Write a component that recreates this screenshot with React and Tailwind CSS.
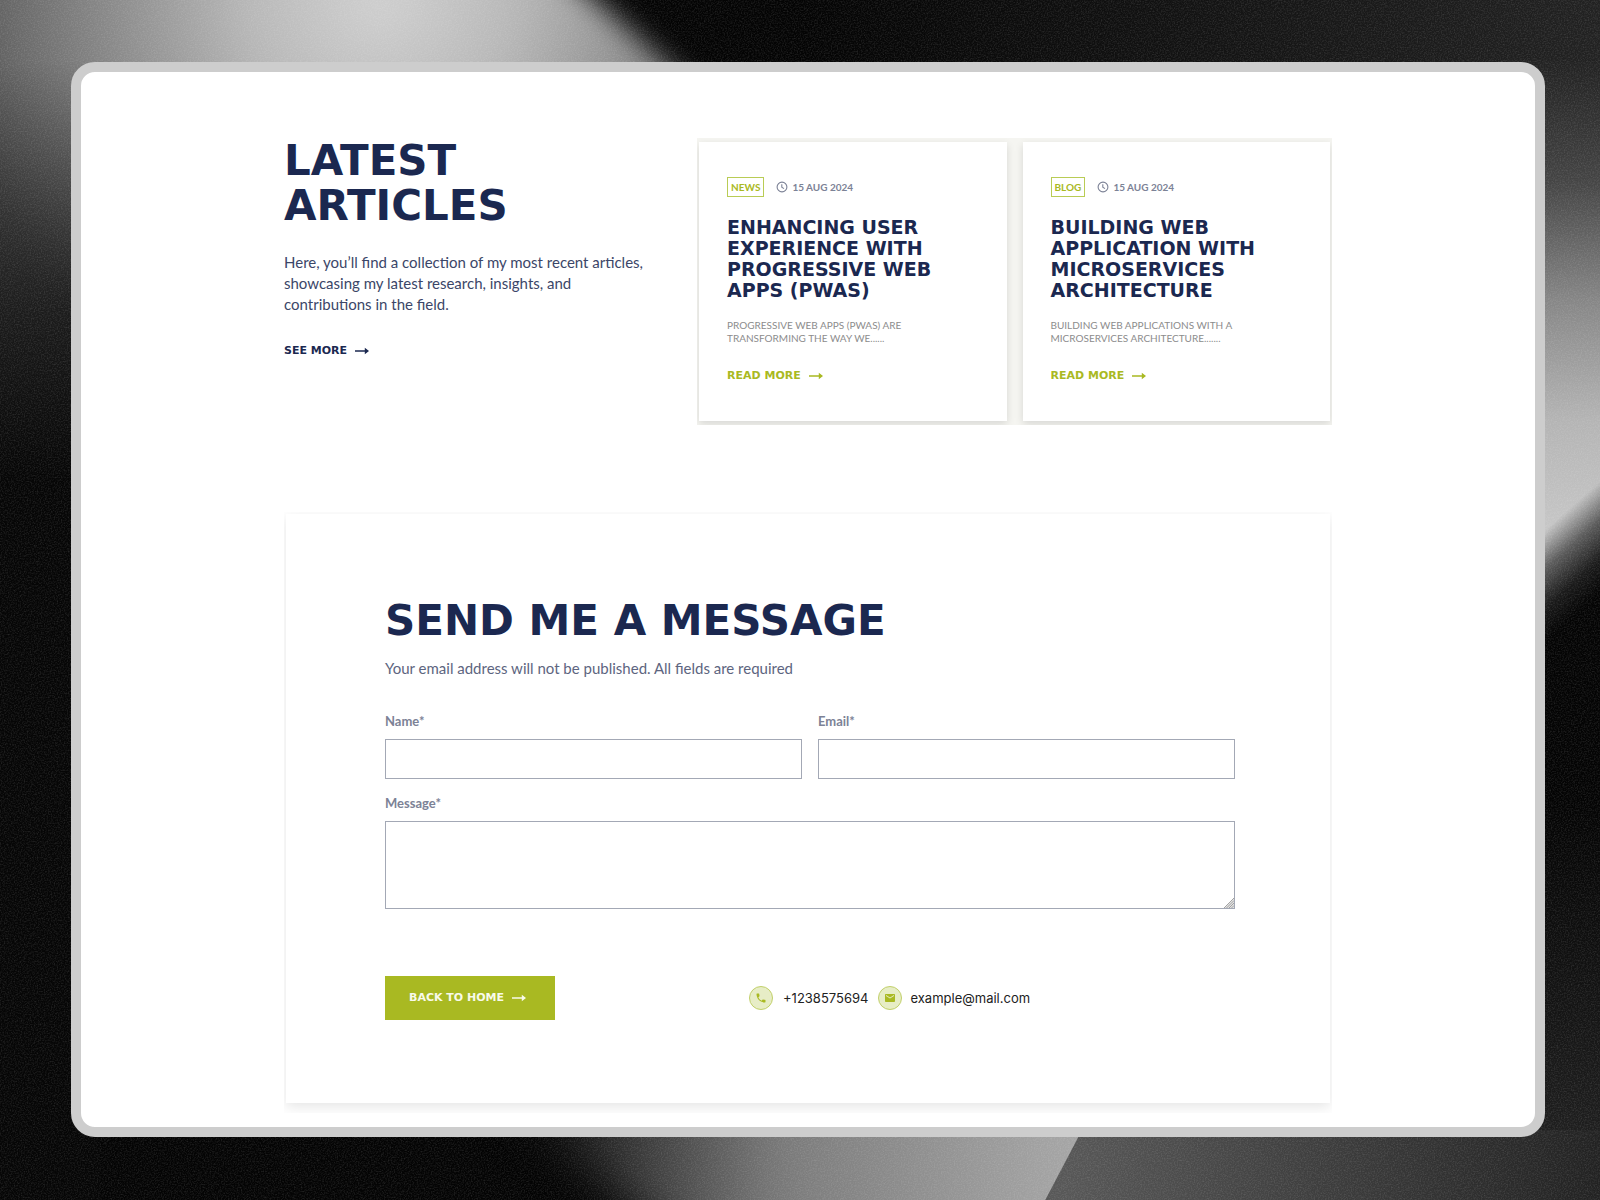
import React from "react";

const articles = [
  {
    id: "pwa",
    tag: "News",
    date: "15 Aug 2024",
    title: ["Enhancing User", "Experience with", "Progressive Web", "Apps (PWAs)"],
    excerpt: ["Progressive Web Apps (PWAs) are", "transforming the way we......"],
  },
  {
    id: "microservices",
    tag: "Blog",
    date: "15 Aug 2024",
    title: ["Building Web", "Application with", "Microservices", "Architecture"],
    excerpt: ["Building web applications with a", "microservices architecture......."],
  },
];

export default function App() {
  return (
    <div className="relative min-h-screen overflow-hidden bg-black pt-[62px] pr-[55px] pb-[63px] pl-[71px] font-[Lato,sans-serif] text-[#1b2850]">
      <Backdrop />
      <main className="relative rounded-3xl border-10 border-[#cdcdcd] bg-white pt-[66px] pb-[14px]">
        <div className="mx-auto max-w-[1048px]">
          <LatestArticles />
          <ContactForm />
        </div>
      </main>
    </div>
  );
}

/* ================= ARTICLES ================= */
function LatestArticles() {
  return (
    <section className="flex items-start justify-between">
      <div>
        <h2 className="font-['DejaVu_Sans',sans-serif] text-[42px] leading-[45px] font-bold uppercase">
          Latest
          <br />
          Articles
        </h2>
        <p className="mt-[24px] text-[15px] leading-[21px] text-[#3b4668]">
          Here, you’ll find a collection of my most recent articles,
          <br />
          showcasing my latest research, insights, and
          <br />
          contributions in the field.
        </p>
        <a href="#articles" className="mt-[28px] inline-flex items-center gap-2 font-['DejaVu_Sans',sans-serif] text-[11px] leading-4 font-bold uppercase">
          See more
          <Arrow />
        </a>
      </div>

      <div className="grid w-[635px] grid-cols-2 gap-4 overflow-hidden bg-[#f5f5f1] px-[2px] py-1">
        {articles.map((a) => (
          <ArticleCard key={a.id} article={a} />
        ))}
      </div>
    </section>
  );
}

function ArticleCard({ article }) {
  return (
    <article className="bg-white px-7 pt-[35px] pb-[36px] shadow-[0_3px_8px_rgba(0,0,0,0.12)]">
      <div className="flex items-center gap-3 text-[10px] leading-4">
        <span className="border border-[#b9cc55] px-[3px] py-px font-bold text-[#a9b922] uppercase">
          {article.tag}
        </span>
        <span className="flex items-center gap-1 font-bold text-[#7c8296] uppercase">
          <Clock />
          {article.date}
        </span>
      </div>

      <h3 className="mt-[20px] font-['DejaVu_Sans',sans-serif] text-[19px] leading-[21px] font-bold whitespace-nowrap uppercase">
        {article.title.map((line) => (
          <span key={line} className="block">{line}</span>
        ))}
      </h3>

      <p className="mt-[18px] text-[10px] leading-[13px] whitespace-nowrap text-[#8c8c8c] uppercase">
        {article.excerpt.map((line) => (
          <span key={line} className="block">{line}</span>
        ))}
      </p>

      <a href={`#${article.id}`} className="mt-[23px] inline-flex items-center gap-2 font-['DejaVu_Sans',sans-serif] text-[11px] leading-4 font-bold text-[#a9b922] uppercase">
        Read more
        <Arrow />
      </a>
    </article>
  );
}

/* ================= CONTACT FORM ================= */
function ContactForm() {
  const label = "block text-[13px] leading-4 font-bold text-[#7c8296]";
  const field = "mt-[10px] block w-full border border-[#a3a8b5] bg-white px-3 text-sm outline-none";

  return (
    <section className="mt-[87px] overflow-hidden px-[2px] pt-[2px] pb-[10px]">
      <div className="bg-white pt-[84px] pr-[95px] pb-[83px] pl-[99px] shadow-[0_4px_12px_rgba(0,0,0,0.1)]">
        <h2 className="font-['DejaVu_Sans',sans-serif] text-[42px] leading-[45px] font-bold uppercase">
          Send me a message
        </h2>
        <p className="mt-[15px] text-[15px] leading-[21px] text-[#5d6580]">
          Your email address will not be published. All fields are required
        </p>

        <form className="mt-[34px]" onSubmit={(e) => e.preventDefault()}>
          <div className="grid grid-cols-2 gap-4">
            <div>
              <label htmlFor="name" className={label}>Name*</label>
              <input id="name" type="text" className={`${field} h-10`} />
            </div>
            <div>
              <label htmlFor="email" className={label}>Email*</label>
              <input id="email" type="email" className={`${field} h-10`} />
            </div>
          </div>

          <div className="relative mt-4">
            <label htmlFor="message" className={label}>Message*</label>
            <textarea id="message" className={`${field} h-[88px] resize-none py-2`} />
            <Grip />
          </div>

          <div className="mt-[67px] flex items-center">
            <button type="button" className="flex h-[44px] w-[170px] items-center gap-2 bg-[#a9b922] px-6 font-['DejaVu_Sans',sans-serif] text-[11px] font-bold whitespace-nowrap text-[#f8faea] uppercase">
              Back to home
              <Arrow />
            </button>
            <div className="ml-[194px] flex items-center gap-[10px] font-[Inter,sans-serif] text-[13px] leading-5 text-[#222]">
              <a href="tel:+1238575694" className="flex items-center gap-[10px]">
                <ContactIcon>
                  <path d="M6.62 10.79a15.15 15.15 0 0 0 6.59 6.59l2.2-2.2a1 1 0 0 1 1.02-.24c1.12.37 2.33.57 3.57.57.55 0 1 .45 1 1V20c0 .55-.45 1-1 1C10.61 21 3 13.39 3 4c0-.55.45-1 1-1h3.5c.55 0 1 .45 1 1 0 1.25.2 2.45.57 3.57.11.35.03.74-.25 1.02z" />
                </ContactIcon>
                +1238575694
              </a>
              <a href="mailto:example@mail.com" className="flex items-center gap-2">
                <ContactIcon>
                  <path d="M20 4H4c-1.1 0-2 .9-2 2v12c0 1.1.9 2 2 2h16c1.1 0 2-.9 2-2V6c0-1.1-.9-2-2-2m0 4-8 5-8-5V6l8 5 8-5z" />
                </ContactIcon>
                example@mail.com
              </a>
            </div>
          </div>
        </form>
      </div>
    </section>
  );
}

/* ================= ICONS ================= */
function ContactIcon({ children }) {
  return (
    <span className="flex size-6 items-center justify-center rounded-full border border-[#c2d06a] bg-[#e7edc6]">
      <svg viewBox="0 0 24 24" className="size-3" fill="#a9b922" aria-hidden="true">
        {children}
      </svg>
    </span>
  );
}

function Arrow() {
  return (
    <svg viewBox="0 0 14 8" className="h-2 w-[14px]" fill="currentColor" aria-hidden="true">
      <path d="M0 3.2h9.8V0.8L14 4l-4.2 3.2V4.8H0z" />
    </svg>
  );
}

function Clock() {
  return (
    <svg viewBox="0 0 12 12" className="size-3" fill="none" stroke="currentColor" strokeWidth="1.1" aria-hidden="true">
      <circle cx="6" cy="6" r="4.9" />
      <path d="M5.8 3.2v3l2.2 1.4" />
    </svg>
  );
}

function Grip() {
  return (
    <svg viewBox="0 0 10 10" className="absolute right-px bottom-px size-[10px]" aria-hidden="true">
      <path d="M10 0v10H0z" fill="#e2e2e2" />
      <path d="M0 10 10 0M2.5 10 10 2.5M5 10l5-5M7.5 10 10 7.5" stroke="#9a9a9a" strokeWidth="0.9" />
    </svg>
  );
}

/* Dark blurred light streaks with a little film grain */
function Backdrop() {
  return (
    <svg className="absolute inset-0 size-full" viewBox="0 0 1600 1200" preserveAspectRatio="none" aria-hidden="true">
      <defs>
        <filter id="soft" x="-20%" y="-20%" width="140%" height="140%" colorInterpolationFilters="sRGB">
          <feGaussianBlur stdDeviation="14" />
        </filter>
        <filter id="softer" x="-60%" y="-60%" width="220%" height="220%" colorInterpolationFilters="sRGB">
          <feGaussianBlur stdDeviation="22" />
        </filter>
        <filter id="grain" x="0" y="0" width="100%" height="100%" colorInterpolationFilters="sRGB">
          <feTurbulence type="fractalNoise" baseFrequency="0.7" numOctaves="2" />
          <feColorMatrix values="0 0 0 0 1  0 0 0 0 1  0 0 0 0 1  1 0 0 0 -0.4" />
        </filter>
        <radialGradient id="topLight" gradientUnits="userSpaceOnUse" cx="380" cy="0" r="440">
          <stop offset="0" stopColor="#d0d0d0" />
          <stop offset="0.3" stopColor="#b8b8b8" />
          <stop offset="0.65" stopColor="#858585" />
          <stop offset="1" stopColor="#505050" />
        </radialGradient>
        <linearGradient id="leftFade" gradientUnits="userSpaceOnUse" x1="0" y1="60" x2="0" y2="480">
          <stop offset="0" stopColor="#060606" stopOpacity="0" />
          <stop offset="0.6" stopColor="#060606" stopOpacity="0.7" />
          <stop offset="1" stopColor="#060606" />
        </linearGradient>
        <linearGradient id="topRight" gradientUnits="userSpaceOnUse" x1="800" y1="0" x2="1600" y2="0">
          <stop offset="0" stopColor="#040404" />
          <stop offset="1" stopColor="#222" />
        </linearGradient>
        <linearGradient id="rightLight" gradientUnits="userSpaceOnUse" x1="0" y1="60" x2="0" y2="540">
          <stop offset="0" stopColor="#222" />
          <stop offset="0.25" stopColor="#444" />
          <stop offset="0.5" stopColor="#868686" />
          <stop offset="0.75" stopColor="#b4b4b4" />
          <stop offset="1" stopColor="#c8c8c8" />
        </linearGradient>
        <linearGradient id="rightEdge" gradientUnits="userSpaceOnUse" x1="1545" y1="530" x2="1600" y2="592">
          <stop offset="0" stopColor="#040404" stopOpacity="0" />
          <stop offset="0.35" stopColor="#040404" stopOpacity="0.55" />
          <stop offset="0.7" stopColor="#040404" stopOpacity="0.88" />
          <stop offset="1" stopColor="#040404" />
        </linearGradient>
        <linearGradient id="bottomLight" gradientUnits="userSpaceOnUse" x1="540" y1="0" x2="1070" y2="0">
          <stop offset="0" stopColor="#0c0c0c" />
          <stop offset="0.45" stopColor="#7a7a7a" />
          <stop offset="1" stopColor="#a6a6a6" />
        </linearGradient>
        <linearGradient id="bottomRight" gradientUnits="userSpaceOnUse" x1="1060" y1="0" x2="1600" y2="0">
          <stop offset="0" stopColor="#585858" />
          <stop offset="1" stopColor="#222" />
        </linearGradient>
        <linearGradient id="rightFloor" gradientUnits="userSpaceOnUse" x1="0" y1="800" x2="0" y2="1200">
          <stop offset="0" stopColor="#242424" stopOpacity="0" />
          <stop offset="1" stopColor="#242424" />
        </linearGradient>
      </defs>
      <rect width="1600" height="1200" fill="#040404" />
      <rect x="800" width="800" height="62" fill="url(#topRight)" />
      <path d="M-80-80H505L720 110V600H-80z" fill="url(#topLight)" filter="url(#soft)" />
      <rect y="60" width="100" height="1140" fill="url(#leftFade)" />
      <rect x="1500" y="60" width="100" height="1140" fill="url(#rightLight)" />
      <rect x="1500" y="60" width="100" height="1140" fill="url(#rightEdge)" />
      <rect x="1500" y="800" width="100" height="400" fill="url(#rightFloor)" />
      <path d="M480 1080h700l-100 200H720z" fill="url(#bottomLight)" filter="url(#softer)" />
      <path d="M1082 1130h520v80h-562z" fill="url(#bottomRight)" />
      <rect width="1600" height="1200" filter="url(#grain)" opacity="0.25" />
    </svg>
  );
}
